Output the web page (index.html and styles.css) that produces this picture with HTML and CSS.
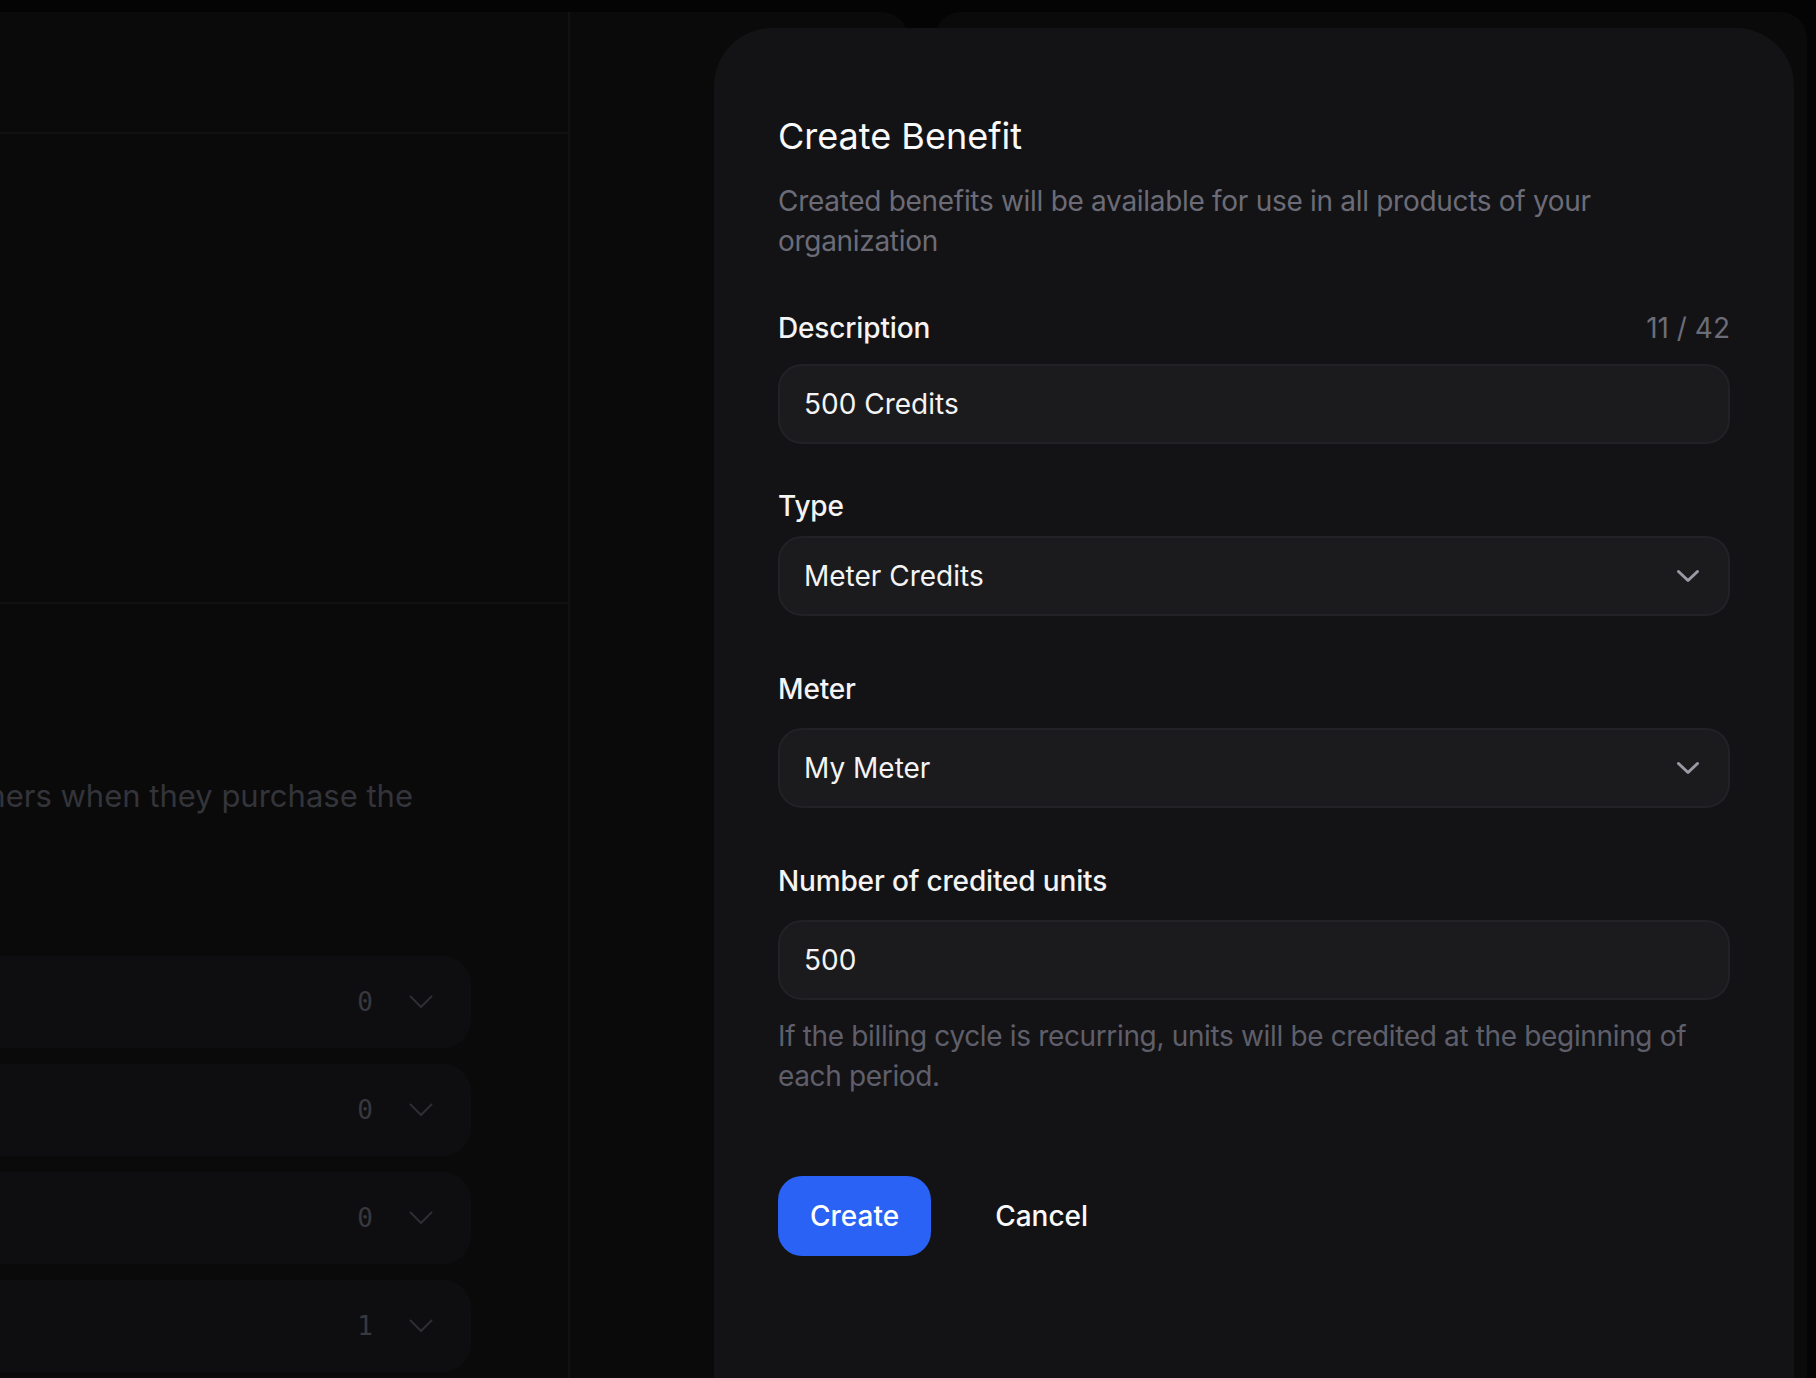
FILE: index.html
```html
<!DOCTYPE html>
<html lang="en">
<head>
<meta charset="utf-8">
<title>Create Benefit</title>
<link rel="stylesheet" href="styles.css">
</head>
<body>
<div class="app">
  <main class="main-panel">
    <section class="left-col">
      <div class="left-head"></div>
      <div class="left-mid"></div>
      <div class="left-bottom">
        <div class="left-content">
          <p class="bg-desc"><span>Configure the benefits that will be granted to your customers when they purchase the</span></p>
          <div class="bg-rows">
            <div class="bg-row"><span class="count">0</span><svg class="row-chev" width="24" height="14" viewBox="0 0 24 14"><path d="M1.5 1.5 L12 12 L22.5 1.5"/></svg></div>
            <div class="bg-row"><span class="count">0</span><svg class="row-chev" width="24" height="14" viewBox="0 0 24 14"><path d="M1.5 1.5 L12 12 L22.5 1.5"/></svg></div>
            <div class="bg-row"><span class="count">0</span><svg class="row-chev" width="24" height="14" viewBox="0 0 24 14"><path d="M1.5 1.5 L12 12 L22.5 1.5"/></svg></div>
            <div class="bg-row"><span class="count">1</span><svg class="row-chev" width="24" height="14" viewBox="0 0 24 14"><path d="M1.5 1.5 L12 12 L22.5 1.5"/></svg></div>
          </div>
        </div>
      </div>
    </section>
    <div class="main-rest"></div>
  </main>
  <aside class="side-panel"></aside>
</div>

<div class="modal">
  <h2 class="modal-title">Create Benefit</h2>
  <p class="modal-sub">Created benefits will be available for use in all products of your organization</p>

  <div class="field field-desc">
    <div class="label-row"><span class="label">Description</span><span class="counter">11 / 42</span></div>
    <div class="control control-desc">500 Credits</div>
  </div>

  <div class="field field-type">
    <div class="label-row"><span class="label">Type</span></div>
    <div class="control control-select control-type">
      <span>Meter Credits</span>
      <svg class="chev" width="24" height="14" viewBox="0 0 24 14"><path d="M2.5 2.5 L12 11.5 L21.5 2.5"/></svg>
    </div>
  </div>

  <div class="field field-meter">
    <div class="label-row"><span class="label">Meter</span></div>
    <div class="control control-select control-gap">
      <span>My Meter</span>
      <svg class="chev" width="24" height="14" viewBox="0 0 24 14"><path d="M2.5 2.5 L12 11.5 L21.5 2.5"/></svg>
    </div>
  </div>

  <div class="field field-units">
    <div class="label-row"><span class="label">Number of credited units</span></div>
    <div class="control control-gap">500</div>
  </div>

  <p class="help">If the billing cycle is recurring, units will be credited at the beginning of each period.</p>

  <div class="actions">
    <button class="btn btn-primary" type="button">Create</button>
    <button class="btn btn-ghost" type="button">Cancel</button>
  </div>
</div>
</body>
</html>
```
FILE: styles.css
```css
* { box-sizing: border-box; }

html, body {
  margin: 0;
  height: 1378px;
  overflow: hidden;
}

body {
  background: #040404;
  font-family: Inter, "Noto Sans", "Liberation Sans", sans-serif;
  position: relative;
}

.app {
  display: flex;
  gap: 27px;
  padding: 12px 9px 0 0;
  height: 1378px;
}

.main-panel {
  width: 908px;
  background: #0a0a0a;
  border-top-right-radius: 26px;
  display: flex;
}

.left-col {
  width: 570px;
  border-right: 2px solid #121214;
  display: flex;
  flex-direction: column;
  overflow: hidden;
}

.left-head {
  height: 122px;
  border-bottom: 2px solid #121214;
}

.left-mid {
  height: 470px;
  border-bottom: 2px solid #121214;
}

.left-bottom {
  flex: 1;
}

.left-content {
  margin-left: -140px;
  width: 611px;
  padding-top: 172px;
}

.bg-desc {
  margin: 0 58px 0 0;
  display: flex;
  justify-content: flex-end;
  white-space: nowrap;
  font-size: 31px;
  line-height: 40px;
  color: #34343b;
}

.bg-rows {
  margin-top: 140px;
  display: flex;
  flex-direction: column;
  gap: 16px;
}

.bg-row {
  height: 92px;
  border-radius: 28px;
  background: #0e0e10;
  display: flex;
  align-items: center;
  justify-content: flex-end;
  gap: 36px;
  padding-right: 38px;
}

.count {
  font-family: "DejaVu Sans Mono", "Liberation Mono", monospace;
  font-size: 26px;
  color: #38383f;
}

.row-chev path {
  fill: none;
  stroke: #2e2e34;
  stroke-width: 2;
  stroke-linecap: round;
  stroke-linejoin: round;
}

.main-rest { flex: 1; }

.side-panel {
  width: 872px;
  background: #0a0a0a;
  border-radius: 26px 26px 0 0;
}

/* Modal sheet */
.modal {
  position: absolute;
  left: 714px;
  top: 28px;
  width: 1080px;
  height: 1420px;
  background: #131315;
  border-radius: 58px;
  padding: 80px 64px 0;
}

.modal-title {
  margin: 0;
  font-size: 36px;
  line-height: 56px;
  font-weight: 400;
  color: #fafafa;
}

.modal-sub {
  margin: 17px 0 0;
  font-size: 28px;
  line-height: 40px;
  letter-spacing: -0.3px;
  color: #6c6c78;
}

.field-desc { margin-top: 47px; }
.field-type { margin-top: 42px; }
.field-meter { margin-top: 53px; }
.field-units { margin-top: 53px; }

.label-row {
  display: flex;
  justify-content: space-between;
  align-items: baseline;
  font-size: 28px;
  line-height: 40px;
}

.label {
  color: #f4f4f5;
  font-weight: 500;
  letter-spacing: -0.15px;
}

.counter {
  color: #6c6c78;
}

.control {
  height: 80px;
  border: 2px solid #222226;
  border-radius: 24px;
  background: #1b1b1e;
  padding: 0 28px 0 24px;
  display: flex;
  align-items: center;
  justify-content: space-between;
  font-size: 28px;
  color: #f4f4f5;
}

.control-desc { margin-top: 16px; }
.control-type { margin-top: 10px; }
.control-gap { margin-top: 19px; }

.chev path {
  fill: none;
  stroke: #9a9aa2;
  stroke-width: 3;
  stroke-linecap: round;
  stroke-linejoin: round;
}

.help {
  margin: 16px 0 0;
  font-size: 28px;
  line-height: 40px;
  letter-spacing: -0.35px;
  color: #5f5f6b;
}

.actions {
  margin-top: 80px;
  display: flex;
  gap: 32px;
}

.btn {
  height: 80px;
  padding: 0 32px;
  border: 0;
  border-radius: 24px;
  font-family: inherit;
  font-size: 28px;
  font-weight: 500;
  color: #fafafa;
  background: transparent;
}

.btn-primary {
  background: #2a62f6;
  color: #ffffff;
}
```
